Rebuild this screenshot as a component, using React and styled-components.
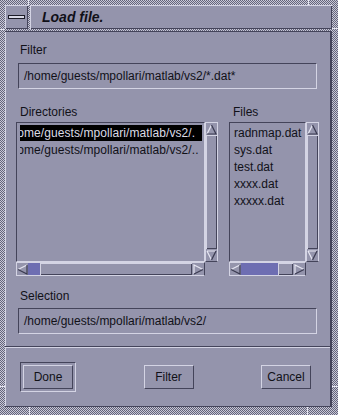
import React from 'react';
import styled, { createGlobalStyle } from 'styled-components';

const BG = '#9494ac';
const LIGHT = '#d4d4e4';
const DARK = '#44445a';
const TROUGH = '#6e6eb2';

const GlobalStyle = createGlobalStyle`
  html, body {
    margin: 0;
    padding: 0;
    background: ${BG};
  }
  body {
    font-family: 'Liberation Sans', Arial, sans-serif;
    font-size: 12px;
    color: #111118;
  }
`;

const Frame = styled.div`
  position: relative;
  box-sizing: border-box;
  width: 338px;
  height: 415px;
  padding: 5px 6px 8px 5px;
  display: flex;
  flex-direction: column;
  gap: 2px;
  background: repeating-conic-gradient(#c8c8d8 0 25%, #64647a 0 50%) 0 0 / 2px 2px;
`;

const Tick = styled.div`
  position: absolute;
  left: ${({ $x }) => $x}px;
  top: ${({ $y }) => $y}px;
  width: ${({ $w }) => $w}px;
  height: ${({ $h }) => $h}px;
  background: #e4e4f0;
`;

const TitleBar = styled.div`
  display: flex;
  gap: 2px;
  height: 24px;
`;

const MenuButton = styled.div`
  width: 23px;
  display: flex;
  align-items: center;
  justify-content: center;
  background: ${BG};
  box-shadow: inset 1px 1px ${LIGHT}, inset -1px -1px ${DARK};

  & > span {
    display: block;
    width: 15px;
    height: 2px;
    background: #d8d8e6;
    border: 1px solid #1a1a26;
  }
`;

const Title = styled.div`
  flex: 1;
  background: ${BG};
  box-shadow: inset 1px 1px ${LIGHT}, inset -1px -1px ${DARK};
  padding-left: 12px;
  line-height: 24px;
  font-size: 14px;
  font-weight: bold;
  font-style: italic;
  color: #101018;
`;

const Body = styled.div`
  flex: 1;
  display: flex;
  flex-direction: column;
  background: ${BG};
  border-top: 1px solid ${DARK};
  border-right: 2px solid ${DARK};
  border-bottom: 1px solid ${DARK};
  box-shadow: inset 1px 0 ${LIGHT};
`;

const Content = styled.div`
  padding: 11px 12px 12px 11px;
  display: flex;
  flex-direction: column;
`;

const Label = styled.div`
  line-height: 14px;
  padding-left: 4px;
  margin-top: ${({ $top }) => $top || 0}px;
`;

const Field = styled.div`
  box-sizing: border-box;
  height: 26px;
  margin: ${({ $top }) => $top || 0}px 1px 0 2px;
  padding-left: 5px;
  line-height: 24px;
  border: 1px solid;
  border-color: ${DARK} ${LIGHT} ${LIGHT} ${DARK};
  white-space: nowrap;
  overflow: hidden;
`;

const ListsRow = styled.div`
  display: flex;
  gap: 11px;
  margin-top: 16px;
`;

const ListColumn = styled.div`
  display: flex;
  flex-direction: column;
  ${({ $width }) => ($width ? `width: ${$width}px;` : 'flex: 1;')}
  min-width: 0;
`;

const ScrollList = styled.div`
  display: grid;
  grid-template-columns: 1fr 13px;
  grid-template-rows: 140px 14px;
  margin-top: 3px;
`;

const ListBox = styled.div`
  box-sizing: border-box;
  border: 1px solid;
  border-color: ${DARK} ${LIGHT} ${LIGHT} ${DARK};
  padding: 2px 2px 0 3px;
  overflow: hidden;
  min-width: 0;
`;

const Row = styled.div`
  height: 16px;
  margin-bottom: 1px;
  line-height: 16px;
  padding-left: 1px;
  white-space: nowrap;
  overflow: hidden;
  background: ${({ $selected }) => ($selected ? '#000' : 'transparent')};
  color: ${({ $selected }) => ($selected ? '#dcdce6' : '#111118')};

  & > span {
    display: inline-block;
    margin-left: ${({ $shift }) => $shift || 0}px;
    letter-spacing: ${({ $shift }) => ($shift ? '0.08px' : 'normal')};
  }
`;

const VScroll = styled.div`
  box-sizing: border-box;
  display: flex;
  flex-direction: column;
  border: 1px solid;
  border-color: ${LIGHT} ${LIGHT} ${DARK} ${LIGHT};
`;

const HScroll = styled.div`
  box-sizing: border-box;
  display: flex;
  border: 1px solid;
  border-color: ${LIGHT} ${DARK} ${LIGHT} ${LIGHT};
`;

const Arrow = styled.div`
  flex: none;
  width: ${({ $w }) => $w}px;
  height: ${({ $h }) => $h}px;
  display: flex;
  align-items: center;
  justify-content: center;
`;

const VTrough = styled.div`
  flex: 1;
  display: flex;
  flex-direction: column;
  background: ${TROUGH};
`;

const HTrough = styled.div`
  flex: 1;
  display: flex;
  background: ${TROUGH};
`;

const Slider = styled.div`
  background: ${BG};
  box-shadow: inset 1px 1px ${LIGHT}, inset -1px -1px ${DARK};
  margin-left: ${({ $offset }) => $offset || 0}px;
  ${({ $width }) => ($width ? `width: ${$width}px;` : 'flex: 1;')}
`;

const Separator = styled.div`
  border-top: 1px solid ${DARK};
  border-bottom: 1px solid ${LIGHT};
`;

const ButtonRow = styled.div`
  flex: 1;
  display: flex;
  align-items: center;
  justify-content: space-between;
  padding: 0 19px 0 15px;
`;

const DefaultRing = styled.div`
  padding: 2px;
  border: 1px solid;
  border-color: ${DARK} ${LIGHT} ${LIGHT} ${DARK};
`;

const Button = styled.button`
  box-sizing: border-box;
  width: 50px;
  height: 24px;
  padding: 0;
  margin: 0;
  background: ${BG};
  border: 1px solid;
  border-color: ${LIGHT} ${DARK} ${DARK} ${LIGHT};
  font-family: 'Liberation Sans', Arial, sans-serif;
  font-size: 12px;
  color: #111118;
`;

const ArrowIcon = ({ dir }) => {
  const shapes = {
    up: { light: 'M5.5 1 L1 10', dark: 'M5.5 1 L10 10 L1 10' },
    down: { light: 'M1 1 L10 1 M1 1 L5.5 10', dark: 'M10 1 L5.5 10' },
    left: { light: 'M10 1 L1 5.5', dark: 'M1 5.5 L10 10 L10 1' },
    right: { light: 'M1 10 L1 1 L10 5.5', dark: 'M10 5.5 L1 10' },
  };
  const s = shapes[dir];
  return (
    <svg width="11" height="11" viewBox="0 0 11 11">
      <path d={s.light} fill="none" stroke="#e6e6f2" strokeWidth="1.2" />
      <path d={s.dark} fill="none" stroke="#3a3a50" strokeWidth="1.2" />
    </svg>
  );
};

const FileList = ({ rows, shift, hOffset, hWidth }) => (
  <ScrollList>
    <ListBox>
      {rows.map((r, i) => (
        <Row key={r} $selected={shift && i === 0} $shift={shift}>
          <span>{r}</span>
        </Row>
      ))}
    </ListBox>
    <VScroll>
      <Arrow $w={11} $h={12}>
        <ArrowIcon dir="up" />
      </Arrow>
      <VTrough>
        <Slider />
      </VTrough>
      <Arrow $w={11} $h={12}>
        <ArrowIcon dir="down" />
      </Arrow>
    </VScroll>
    <HScroll>
      <Arrow $w={11} $h={12}>
        <ArrowIcon dir="left" />
      </Arrow>
      <HTrough>
        <Slider $offset={hOffset} $width={hWidth} />
      </HTrough>
      <Arrow $w={12} $h={12}>
        <ArrowIcon dir="right" />
      </Arrow>
    </HScroll>
  </ScrollList>
);

const dirs = ['/home/guests/mpollari/matlab/vs2/.', '/home/guests/mpollari/matlab/vs2/..'];
const files = ['radnmap.dat', 'sys.dat', 'test.dat', 'xxxx.dat', 'xxxxx.dat'];

export default function App() {
  return (
    <>
      <GlobalStyle />
      <Frame>
        <Tick $x={28} $y={0} $w={1} $h={5} />
        <Tick $x={308} $y={0} $w={1} $h={5} />
        <Tick $x={29} $y={407} $w={1} $h={8} />
        <Tick $x={307} $y={407} $w={1} $h={8} />
        <Tick $x={0} $y={29} $w={5} $h={1} />
        <Tick $x={332} $y={28} $w={6} $h={1} />
        <Tick $x={0} $y={386} $w={5} $h={1} />
        <Tick $x={332} $y={386} $w={6} $h={1} />
        <TitleBar>
          <MenuButton>
            <span />
          </MenuButton>
          <Title>Load file.</Title>
        </TitleBar>
        <Body>
          <Content>
            <Label>Filter</Label>
            <Field $top={6}>/home/guests/mpollari/matlab/vs2/*.dat*</Field>
            <ListsRow>
              <ListColumn $width={202}>
                <Label>Directories</Label>
                <FileList rows={dirs} shift={-14} hOffset={12} />
              </ListColumn>
              <ListColumn>
                <Label>Files</Label>
                <FileList rows={files} hOffset={37} hWidth={15} />
              </ListColumn>
            </ListsRow>
            <Label $top={13}>Selection</Label>
            <Field $top={5}>/home/guests/mpollari/matlab/vs2/</Field>
          </Content>
          <Separator />
          <ButtonRow>
            <DefaultRing>
              <Button>Done</Button>
            </DefaultRing>
            <Button>Filter</Button>
            <Button>Cancel</Button>
          </ButtonRow>
        </Body>
      </Frame>
    </>
  );
}
